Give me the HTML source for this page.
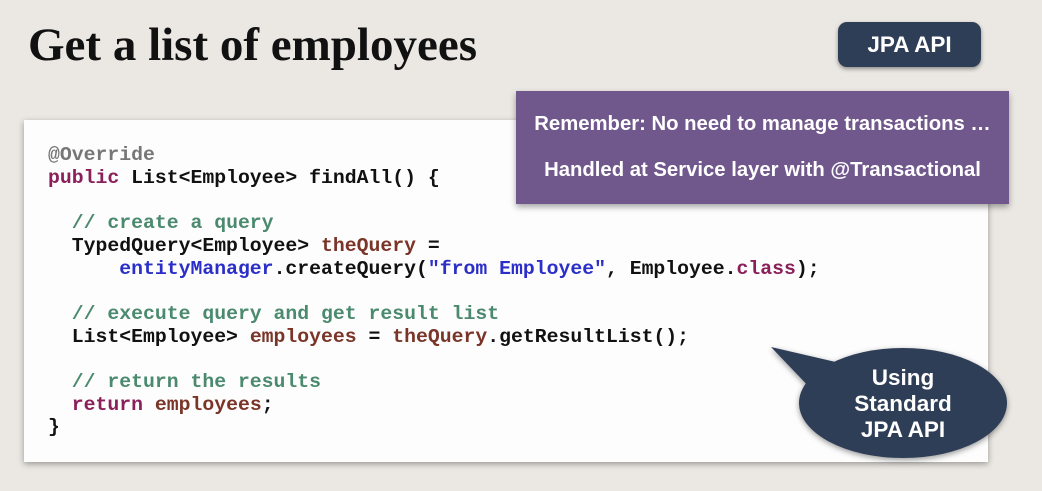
<!DOCTYPE html>
<html><head><meta charset="utf-8"><style>
body{margin:0;width:1042px;height:491px;background:#ebe8e3;position:relative;overflow:hidden;font-family:"Liberation Sans",sans-serif}
h1{position:absolute;left:28px;top:18px;margin:0;font-family:"Liberation Serif",serif;font-weight:bold;font-size:47px;color:#111;letter-spacing:0}
.code{position:absolute;left:24px;top:120px;width:964px;height:342px;background:#fdfdfd;box-shadow:0 2px 6px rgba(0,0,0,.35)}
pre{position:absolute;left:48px;top:144px;margin:0;font-family:"Liberation Mono",monospace;font-weight:bold;font-size:19.8px;line-height:22.7px;color:#111}
.a{color:#777}.k{color:#8a1f5a}.c{color:#4b8a6e}.v{color:#7a3528}.s{color:#2b2fc8}
.pill{position:absolute;left:838px;top:22px;width:143px;height:45px;background:#2f3e57;border-radius:9px;color:#fff;font-weight:bold;font-size:22.5px;text-align:center;line-height:45px;box-shadow:0 2px 4px rgba(0,0,0,.4)}
.purp{position:absolute;left:516px;top:91px;width:493px;height:113px;background:#70578c;box-shadow:0 3px 6px rgba(0,0,0,.35);color:#fff;font-weight:bold;font-size:20.3px;text-align:center}
.purp div{position:absolute;width:100%}
</style></head><body>
<h1>Get a list of employees</h1>
<div class="pill">JPA API</div>
<div class="code"></div>
<pre><span class="a">@Override</span>
<span class="k">public</span> List&lt;Employee&gt; findAll() {

  <span class="c">// create a query</span>
  TypedQuery&lt;Employee&gt; <span class="v">theQuery</span> =
      <span class="s">entityManager</span>.createQuery(<span class="s">"from Employee"</span>, Employee.<span class="k">class</span>);

  <span class="c">// execute query and get result list</span>
  List&lt;Employee&gt; <span class="v">employees</span> = <span class="v">theQuery</span>.getResultList();

  <span class="c">// return the results</span>
  <span class="k">return</span> <span class="v">employees</span>;
}</pre>
<div class="purp"><div style="top:22px">Remember: No need to manage transactions …</div><div style="top:68px">Handled at Service layer with @Transactional</div></div>
<svg style="position:absolute;left:0;top:0" width="1042" height="491">
<g fill="#2f3e57" style="filter:drop-shadow(0 2px 3px rgba(0,0,0,.4))">
<path d="M771 347 L840 363 L815 393 Z"/>
<ellipse cx="903" cy="403" rx="104" ry="55"/>
</g>
<g fill="#fff" font-family="Liberation Sans" font-weight="bold" font-size="22.5" text-anchor="middle">
<text x="903" y="385">Using</text><text x="903" y="411">Standard</text><text x="903" y="437">JPA API</text>
</g>
</svg>
</body></html>
